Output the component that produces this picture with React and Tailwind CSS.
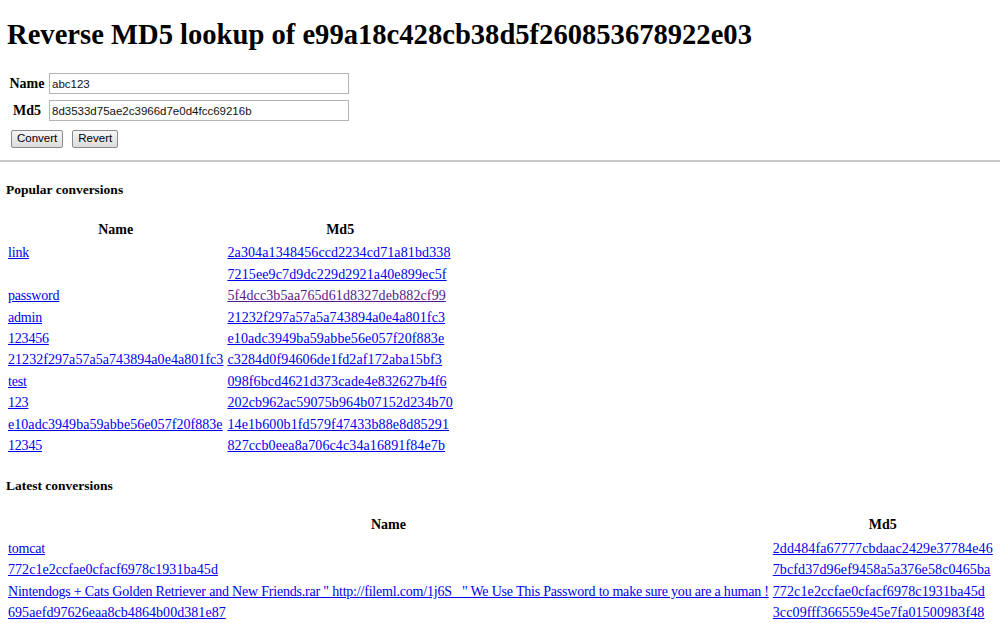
const popular = [
  ["link", "2a304a1348456ccd2234cd71a81bd338"],
  ["", "7215ee9c7d9dc229d2921a40e899ec5f"],
  ["password", "5f4dcc3b5aa765d61d8327deb882cf99", true],
  ["admin", "21232f297a57a5a743894a0e4a801fc3"],
  ["123456", "e10adc3949ba59abbe56e057f20f883e"],
  ["21232f297a57a5a743894a0e4a801fc3", "c3284d0f94606de1fd2af172aba15bf3"],
  ["test", "098f6bcd4621d373cade4e832627b4f6"],
  ["123", "202cb962ac59075b964b07152d234b70"],
  ["e10adc3949ba59abbe56e057f20f883e", "14e1b600b1fd579f47433b88e8d85291"],
  ["12345", "827ccb0eea8a706c4c34a16891f84e7b"],
];

const latest = [
  ["tomcat", "2dd484fa67777cbdaac2429e37784e46"],
  ["772c1e2ccfae0cfacf6978c1931ba45d", "7bcfd37d96ef9458a5a376e58c0465ba"],
  [
    'Nintendogs + Cats Golden Retriever and New Friends.rar " http://fileml.com/1j6S_ " We Use This Password to make sure you are a human !',
    "772c1e2ccfae0cfacf6978c1931ba45d",
  ],
  ["695aefd97626eaa8cb4864b00d381e87", "3cc09fff366559e45e7fa01500983f48"],
];

const isHash = (s) => /^[0-9a-f]{32}$/.test(s);

function Link({ children, visited, first }) {
  let track = "tracking-[-0.2px]";
  if (isHash(children)) track = first ? "tracking-[0.05px]" : "tracking-[0.12px]";
  return (
    <a href="#" className={`underline ${track} ${visited ? "text-[#551a8b]" : "text-[#0000ee]"}`}>
      {children}
    </a>
  );
}

function ConvTable({ rows }) {
  return (
    <table className="border-separate border-spacing-[2px] -ml-[3px] whitespace-nowrap">
      <thead>
        <tr>
          <th className="px-[1px] pt-[1px] pb-[3px] leading-[17.4px] font-bold text-center">Name</th>
          <th className="px-[1px] pt-[1px] pb-[3px] leading-[17.4px] font-bold text-center">Md5</th>
        </tr>
      </thead>
      <tbody>
        {rows.map((r, i) => (
          <tr key={i}>
            <td className="px-[1px] py-[1px] leading-[17.4px]">
              {r[0] ? <Link first>{r[0]}</Link> : null}
            </td>
            <td className="px-[1px] py-[1px] leading-[17.4px]">
              <Link visited={r[2]}>{r[1]}</Link>
            </td>
          </tr>
        ))}
      </tbody>
    </table>
  );
}

function Btn({ children }) {
  return (
    <button className="h-[18px] px-[5px] text-[11.5px] leading-none text-black border border-[#8a8a8a] rounded-[2px] bg-gradient-to-b from-[#f6f6f6] to-[#dcdcdc] font-['Liberation_Sans',Arial,sans-serif]">
      {children}
    </button>
  );
}

const inputCls =
  "ml-[2px] w-[300px] h-[21px] px-[2px] border border-[#b4b4b4] text-[11.5px] text-[#111] font-['Liberation_Sans',Arial,sans-serif] outline-none";

export default function App() {
  return (
    <div className="min-h-[623px] bg-white text-black text-[14px] font-['Liberation_Serif','Times_New_Roman',serif]">
      <h1 className="pl-[7px] pt-[18px] text-[28.6px] font-bold leading-[34px]">
        Reverse MD5 lookup of e99a18c428cb38d5f260853678922e03
      </h1>

      <div className="pl-[7px] pt-[21px]">
        <div className="flex items-center h-[21px]">
          <span className="w-[40px] text-center font-bold">Name</span>
          <input readOnly value="abc123" className={inputCls} />
        </div>
        <div className="flex items-center h-[21px] mt-[6px]">
          <span className="w-[40px] text-center font-bold">Md5</span>
          <input readOnly value="8d3533d75ae2c3966d7e0d4fcc69216b" className={inputCls} />
        </div>
        <div className="flex gap-[9px] pl-[4px] mt-[9px]">
          <Btn>Convert</Btn>
          <Btn>Revert</Btn>
        </div>
      </div>

      <hr className="mt-[12px] border-0 border-t-2 border-[#c8c8c8]" />

      <div className="px-[8px]">
        <h3 className="mt-[19px] -ml-[2px] text-[13.5px] font-bold leading-[18px]">Popular conversions</h3>
        <div className="mt-[19px]">
          <ConvTable rows={popular} />
        </div>

        <h3 className="mt-[20px] -ml-[2px] text-[13.5px] font-bold leading-[18px]">Latest conversions</h3>
        <div className="mt-[18px]">
          <ConvTable rows={latest} />
        </div>
      </div>
    </div>
  );
}
